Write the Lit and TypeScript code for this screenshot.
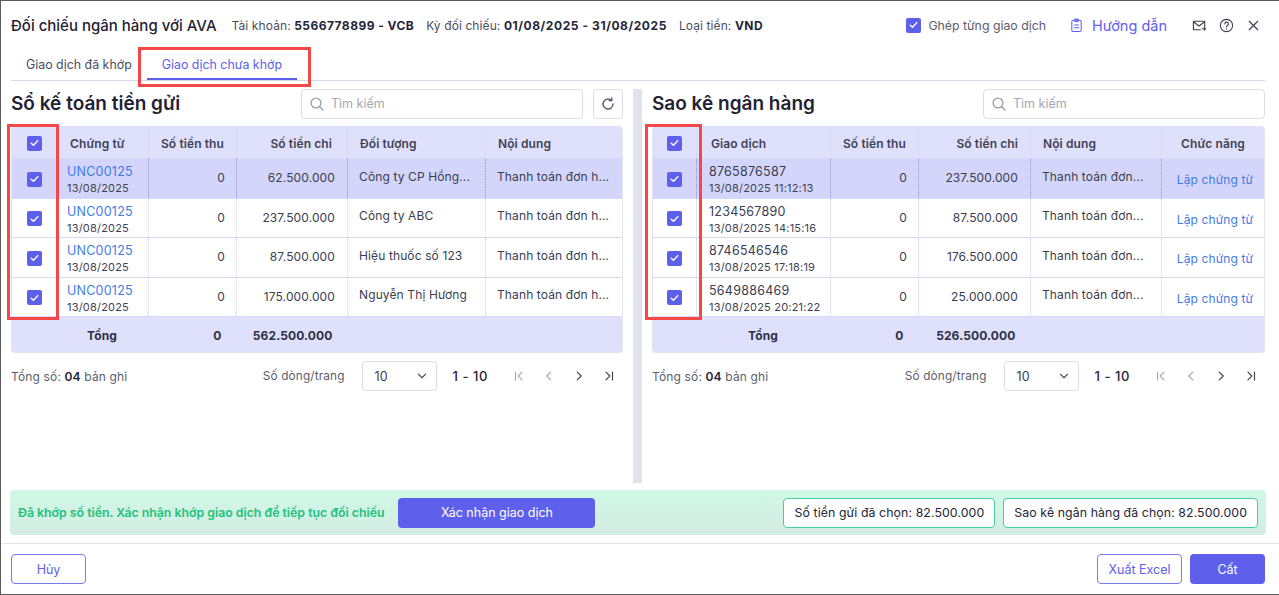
import { LitElement, html, css, svg } from "lit";
import { customElement } from "lit/decorators.js";

const check = html`<span class="cb"><svg width="9" height="8" viewBox="0 0 9 8"><path d="M1.2 4.2 3.5 6.3 7.8 1.6" fill="none" stroke="#fff" stroke-width="1.4" stroke-linecap="round" stroke-linejoin="round"/></svg></span>`;
const ico = (w: number, d: unknown, stroke = "#4b4f63", sw = 1.3) => html`<svg width="${w}" height="${w}" viewBox="0 0 16 16" fill="none" stroke="${stroke}" stroke-width="${sw}" stroke-linecap="round" stroke-linejoin="round">${d}</svg>`;
const search = ico(16, svg`<circle cx="7" cy="7" r="4.9"/><path d="M10.7 10.7 14 14"/>`, "#9a9cab");
const refresh = ico(16, svg`<path d="M13 8a5 5 0 1 1-1.6-3.7"/><path d="M11.8 1.8v2.8H9"/>`);
const chevron = ico(14, svg`<path d="M4 6l4 4 4-4"/>`);
const pager = (on: boolean, d: unknown) => ico(14, d, on ? "#3d4052" : "#a5a7b5");

const pagination = html`<div class="pg">
  <span class="pg-total">Tổng số: <b>04</b> bản ghi</span>
  <span class="pg-label">Số dòng/trang</span>
  <span class="select">10 ${chevron}</span>
  <b class="pg-range">1 - 10</b>
  <span class="pg-icons">
    ${pager(false, svg`<path d="M4 3.5v9M11.5 3.5 7 8l4.5 4.5"/>`)}
    ${pager(false, svg`<path d="M10 3.5 5.5 8l4.500 4.500"/>`)}
    ${pager(true, svg`<path d="M6 3.5 10.500 8 6 12.500"/>`)}
    ${pager(true, svg`<path d="M12 3.500v9M4.500 3.500 9 8l-4.500 4.500"/>`)}
  </span>
</div>`;

const leftRows = [
  ["62.500.000", "Công ty CP Hồng..."],
  ["237.500.000", "Công ty ABC"],
  ["87.500.000", "Hiệu thuốc số 123"],
  ["175.000.000", "Nguyễn Thị Hương"],
];
const rightRows = [
  ["8765876587", "13/08/2025 11:12:13", "237.500.000"],
  ["1234567890", "13/08/2025 14:15:16", "87.500.000"],
  ["8746546546", "13/08/2025 17:18:19", "176.500.000"],
  ["5649886469", "13/08/2025 20:21:22", "25.000.000"],
];

@customElement("app-root")
export class AppRoot extends LitElement {
  static styles = css`
    :host { display: block; width: 1279px; height: 595px; position: relative; overflow: hidden; background: #fff; font-family: Inter, "Noto Sans", sans-serif; color: #2e3146; font-size: 12.5px; }
    .dlg { box-sizing: border-box; height: 595px; border: 1px solid #5a5a5a; border-right: 0; display: flex; flex-direction: column; padding: 0 14px 0 10px; }
    b { font-weight: 600; }
    .head { height: 48px; display: flex; align-items: center; gap: 12px; flex: none; }
    .title { font-size: 15px; font-weight: 500; color: #1f2233; margin-right: 3px; }
    .meta { font-size: 12px; color: #4a4d60; letter-spacing: 0.1px; }
    .meta b { color: #23263a; font-weight: 700; letter-spacing: 0.45px; }
    .meta b.dates { letter-spacing: 0.58px; }
    .head-r { margin-left: auto; display: flex; align-items: center; }
    .ghep { font-size: 12.3px; color: #5a5d6e; margin-left: 7px; }
    .guide { margin-left: 23px; display: flex; align-items: center; gap: 8px; font-size: 14.5px; color: #5e60ec; }
    .tools { margin-left: 25px; margin-right: 4px; display: flex; gap: 12px; align-items: center; }
    .cb { box-sizing: border-box; width: 15px; height: 15px; border-radius: 2px; background: #5e60ec; display: inline-flex; align-items: center; justify-content: center; }
    .tabs { display: flex; height: 32px; box-sizing: border-box; border-bottom: 1px solid #d6d8ea; flex: none; }
    .tab { padding: 0 15px; display: flex; align-items: center; font-size: 12.4px; color: #4a4d60; }
    .tab.on { color: #5e60ec; box-shadow: inset 0 -2px 0 #5e60ec; }
    .body { flex: 1; display: flex; gap: 10px; padding-top: 8px; min-height: 0; }
    .panel { flex: 1; min-width: 0; }
    .panel.lp { flex: 0 0 612px; }
    .divider { width: 9px; height: 394px; background: #e0e2ee; flex: none; }
    .pbar { height: 29px; display: flex; align-items: center; gap: 10px; margin-bottom: 8px; }
    h2 { margin: 0; margin-right: auto; font-size: 19px; font-weight: 600; color: #1f2233; }
    .search { box-sizing: border-box; width: 282px; height: 30px; border: 1px solid #dcdde8; border-radius: 4px; display: flex; align-items: center; gap: 6px; padding-left: 7px; color: #a5a7b5; font-size: 12.5px; }
    .ref { box-sizing: border-box; width: 30px; height: 30px; border: 1px solid #dcdde8; border-radius: 4px; display: flex; align-items: center; justify-content: center; }
    .tbl { display: grid; grid-template-rows: 33px repeat(4, 39.5px) 35px; border: 1px solid #e3e4f0; border-top: 0; border-radius: 4px; overflow: hidden; font-size: 12px; letter-spacing: 0.12px; color: #3a3d50; }
    .tbl.l { grid-template-columns: 44px 92px 88px 111px 138px 1fr; }
    .tbl.r { grid-template-columns: 43px 134px 88px 112px 131px 1fr; }
    .c { padding: 0 11px; border-left: 1px dotted #cfd1ee; border-bottom: 1px solid #d6d8f6; display: flex; align-items: center; min-width: 0; box-sizing: border-box; white-space: nowrap; }
    .c.first { border-left: 0; justify-content: center; padding: 2px 0 0; }
    .c.h { background: #dfe0fb; font-weight: 600; color: #3f4256; letter-spacing: 0.1px; padding: 2px 12px 0; }
    .c.sel { background: #d3d6fa; border-left-color: #8f92e6; }
    .c.top { align-items: flex-start; padding-top: 9.5px; }
    .c.num { justify-content: flex-end; padding-right: 11px; padding-bottom: 1px; }
    .c.num2 { padding-right: 12px; }
    .c.stack { flex-direction: column; align-items: flex-start; justify-content: center; padding: 5px 0 1px 10px; line-height: 16px; }
    .r .c.stack { padding-left: 12px; }
    .c.h.ctr, .c.ctr { justify-content: center; padding-left: 0; padding-right: 0; }
    .c.link-cell { padding: 3px 0 0 4px; }
    .c.h.hr { justify-content: flex-end; }
    .c.h.w { padding-right: 15px; }
    .c.h.gd { padding-left: 14px; }
    .c.h.cn { padding-left: 13px; }
    .link { color: #3f7be6; }
    .date { font-size: 11px; letter-spacing: 0.2px; color: #3f4256; }
    .stack .id { font-size: 12.5px; letter-spacing: 0.25px; }
    .t { background: #dfe0fb; font-weight: 700; color: #2e3146; display: flex; align-items: center; justify-content: flex-end; padding: 1px 14.5px 0 0; }
    .t.tctr { justify-content: center; padding-right: 0; }
    .pg { display: flex; align-items: center; height: 30px; margin-top: 8px; font-size: 12px; color: #5a5d6e; letter-spacing: 0.15px; }
    .pg b { color: #23263a; }
    .pg-total { margin-right: auto; }
    .pg-label { margin-right: 17px; font-size: 11.8px; }
    .select { box-sizing: border-box; width: 75px; height: 30px; border: 1px solid #dcdde8; border-radius: 4px; display: flex; align-items: center; justify-content: space-between; padding: 0 7px 0 12px; color: #3a3d50; font-size: 12.5px; }
    .pg-range { margin-left: 16px; margin-right: 24px; font-weight: 500; font-size: 13px; letter-spacing: 0.55px; }
    .pg-icons { display: flex; gap: 16px; margin-right: 7px; }
    .bar { height: 45px; flex: none; border-radius: 4px; background: linear-gradient(#d0f8e6, #d5ece3); display: flex; align-items: center; padding: 0 8px; margin: 7px -1px 8px -1px; }
    .ok { font-size: 12.3px; font-weight: 600; color: #21c27c; margin-right: 14px; white-space: nowrap; }
    .btn { box-sizing: border-box; height: 30px; border-radius: 4px; display: flex; align-items: center; justify-content: center; font-size: 12.5px; }
    .solid { background: #5e60ec; color: #fff; }
    .line { background: #fff; border: 1px solid #7779ee; color: #5e60ec; }
    .confirm { width: 197px; }
    .chip { background: #fff; border: 1px solid #43cfa0; color: #23263a; padding: 0 10px; font-size: 12.3px; letter-spacing: 0.1px; white-space: nowrap; }
    .chip.c1 { margin-left: auto; margin-right: 8px; }
    .foot { flex: none; height: 51px; margin: 0 -14px 0 -10px; padding: 10px 14px 0 10px; border-top: 1px solid #e4e5ec; display: flex; gap: 8px; box-sizing: border-box; }
    .w75 { width: 75px; }
    .xl { width: 85px; margin-left: auto; }
    .mark { position: absolute; box-sizing: border-box; border: 3px solid #f44848; pointer-events: none; }
    .m1 { left: 138px; top: 47px; width: 173px; height: 40px; }
    .m2 { left: 7px; top: 124px; width: 52px; height: 196px; }
    .m3 { left: 645px; top: 124px; width: 57px; height: 196px; }
  `;

  cell(text: unknown, cls: string, sel: boolean) {
    return html`<div class="c ${cls} ${sel ? "sel" : ""}">${text}</div>`;
  }

  left() {
    return html`<div class="panel lp">
      <div class="pbar"><h2>Sổ kế toán tiền gửi</h2><div class="search">${search}Tìm kiếm</div><div class="ref">${refresh}</div></div>
      <div class="tbl l">
        <div class="c h first">${check}</div><div class="c h cn">Chứng từ</div><div class="c h hr">Số tiền thu</div><div class="c h hr w">Số tiền chi</div><div class="c h">Đối tượng</div><div class="c h">Nội dung</div>
        ${leftRows.map((r, i) => {
          const s = i === 0;
          return html`${this.cell(check, "first", s)}
            ${this.cell(html`<span class="link id">UNC00125</span><span class="date">13/08/2025</span>`, "stack", s)}
            ${this.cell("0", "num", s)}${this.cell(r[0], "num num2", s)}
            ${this.cell(r[1], "top", s)}${this.cell("Thanh toán đơn h...", "top", s)}`;
        })}
        <div class="t"></div><div class="t tctr">Tổng</div><div class="t">0</div><div class="t">562.500.000</div><div class="t"></div><div class="t"></div>
      </div>
      ${pagination}
    </div>`;
  }

  right() {
    return html`<div class="panel">
      <div class="pbar"><h2>Sao kê ngân hàng</h2><div class="search">${search}Tìm kiếm</div></div>
      <div class="tbl r">
        <div class="c h first">${check}</div><div class="c h gd">Giao dịch</div><div class="c h hr">Số tiền thu</div><div class="c h hr">Số tiền chi</div><div class="c h">Nội dung</div><div class="c h ctr">Chức năng</div>
        ${rightRows.map((r, i) => {
          const s = i === 0;
          return html`${this.cell(check, "first", s)}
            ${this.cell(html`<span class="id">${r[0]}</span><span class="date">${r[1]}</span>`, "stack", s)}
            ${this.cell("0", "num", s)}${this.cell(r[2], "num num2", s)}
            ${this.cell("Thanh toán đơn...", "top", s)}
            ${this.cell(html`<span class="link">Lập chứng từ</span>`, "ctr link-cell", s)}`;
        })}
        <div class="t"></div><div class="t tctr">Tổng</div><div class="t">0</div><div class="t">526.500.000</div><div class="t"></div><div class="t"></div>
      </div>
      ${pagination}
    </div>`;
  }

  render() {
    return html`<div class="dlg">
      <div class="head">
        <span class="title">Đối chiếu ngân hàng với AVA</span>
        <span class="meta">Tài khoản: <b>5566778899 - VCB</b></span>
        <span class="meta">Kỳ đối chiếu: <b class="dates">01/08/2025 - 31/08/2025</b></span>
        <span class="meta">Loại tiền: <b>VND</b></span>
        <div class="head-r">
          ${check}<span class="ghep">Ghép từng giao dịch</span>
          <span class="guide">${ico(15, svg`<rect x="3" y="2.500" width="10" height="12" rx="1.500"/><rect x="6" y="1.200" width="4" height="2.500" rx=".8"/><path d="M5.800 7.500h4.400M5.800 10.500h4.400"/>`, "#5e60ec", 1.1)}Hướng dẫn</span>
          <span class="tools">
            ${ico(15, svg`<path d="M13.500 9V3.500h-12v9H9"/><path d="M1.500 4 7.500 8.500 13.500 4"/><path d="M11 11.500h3.500M13 10l1.500 1.500L13 13"/>`, "#3d4052", 1.2)}
            ${ico(15, svg`<circle cx="8" cy="8" r="6.500"/><path d="M6.200 6.300a1.900 1.900 0 1 1 2.700 1.700c-.6.300-.9.700-.9 1.400"/><path d="M8 11.500v.1"/>`, "#3d4052", 1.2)}
            ${ico(15, svg`<path d="M3.500 3.500l9 9M12.500 3.500l-9 9"/>`, "#3d4052", 1.3)}
          </span>
        </div>
      </div>
      <div class="tabs"><div class="tab">Giao dịch đã khớp</div><div class="tab on">Giao dịch chưa khớp</div></div>
      <div class="body">${this.left()}<div class="divider"></div>${this.right()}</div>
      <div class="bar">
        <span class="ok">Đã khớp số tiền. Xác nhận khớp giao dịch để tiếp tục đối chiếu</span>
        <div class="btn solid confirm">Xác nhận giao dịch</div>
        <div class="btn chip c1">Số tiền gửi đã chọn: 82.500.000</div>
        <div class="btn chip">Sao kê ngân hàng đã chọn: 82.500.000</div>
      </div>
      <div class="foot">
        <div class="btn line w75">Hủy</div>
        <div class="btn line xl">Xuất Excel</div>
        <div class="btn solid w75">Cất</div>
      </div>
    </div>
    <div class="mark m1"></div>
    <div class="mark m2"></div>
    <div class="mark m3"></div>`;
  }
}
